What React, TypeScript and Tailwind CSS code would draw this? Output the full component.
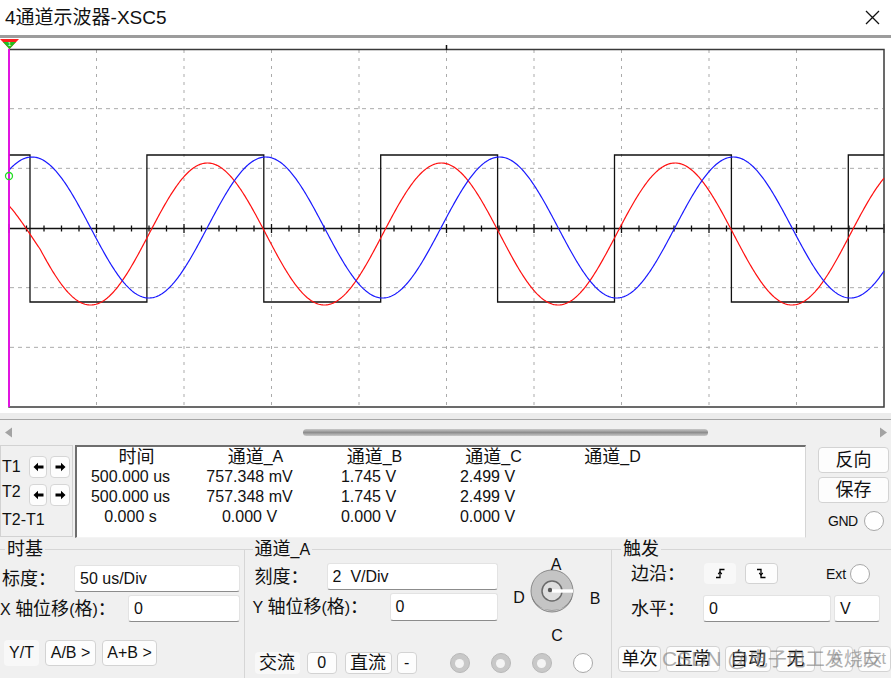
import React from 'react';

const CJK = /([\u2E80-\u9FFF\uFF00-\uFFEF]+)/;

// CJK runs are drawn a bit larger than the latin text around them
function T({ s }: { s: string }) {
  return (
    <>
      {s.split(CJK).map((p, i) =>
        CJK.test(p) ? (
          <span key={i} className="text-[18px]">
            {p}
          </span>
        ) : (
          <React.Fragment key={i}>{p}</React.Fragment>
        )
      )}
    </>
  );
}

const PERIOD = 233.8;

function wave(fn: (x: number) => number) {
  let d = '';
  for (let x = 9; x <= 884; x += 1) d += (x === 9 ? 'M' : 'L') + x + ' ' + fn(x).toFixed(2) + ' ';
  return d;
}

function squarePath() {
  const hi = 155;
  const lo = 302;
  let level = hi;
  let d = `M9 ${hi}`;
  for (let k = 0; k < 8; k++) {
    const x = (30 + k * (PERIOD / 2)).toFixed(1);
    const next = level === hi ? lo : hi;
    d += ` L${x} ${level} L${x} ${next}`;
    level = next;
  }
  d += ` L884 ${level}`;
  return d;
}

// red starts with a short settling bit at the left edge
const redPath = wave((x) => {
  const y = 234 - 71 * Math.sin((2 * Math.PI * (x - 149)) / PERIOD);
  return x < 40 ? y + 13 * ((40 - x) / 31) : y;
});
const bluePath = wave((x) => 227.5 - 70.5 * Math.cos((2 * Math.PI * (x - 32)) / PERIOD));
const sqPath = squarePath();

function Scope() {
  const cols = Array.from({ length: 9 }, (_, i) => 9 + 87.5 * (i + 1));
  const rows = [1, 2, 4, 5].map((j) => 49 + (358 / 6) * j);
  const ticks = Array.from({ length: 51 }, (_, i) => 9 + 17.5 * i);
  return (
    <svg width="891" height="375" viewBox="0 38 891 375" className="block">
      {cols.map((x) => (
        <line key={x} x1={x} y1={50} x2={x} y2={406} stroke="#ababab" strokeWidth="1" strokeDasharray="3 5" />
      ))}
      {rows.map((y) => (
        <line key={y} x1={10} y1={y} x2={883} y2={y} stroke="#ababab" strokeWidth="1" strokeDasharray="4 4" />
      ))}
      <line x1={9} y1={228.5} x2={884} y2={228.5} stroke="#111" strokeWidth="1.5" />
      {ticks.map((x, i) => (
        <line
          key={x}
          x1={x}
          x2={x}
          y1={i % 5 === 0 ? 224 : 225.5}
          y2={i % 5 === 0 ? 233 : 231.5}
          stroke="#111"
          strokeWidth="1.3"
        />
      ))}
      <rect x={9} y={49.5} width={875} height={357.5} fill="none" stroke="#3a3a3a" strokeWidth="1.5" />
      <line x1={446.5} y1={45} x2={446.5} y2={50} stroke="#111" strokeWidth="1.5" />
      <path d={sqPath} fill="none" stroke="#111" strokeWidth="1.3" />
      <path d={redPath} fill="none" stroke="#ff1010" strokeWidth="1.2" />
      <path d={bluePath} fill="none" stroke="#1a1aff" strokeWidth="1.2" />
      <line x1={9} y1={49} x2={9} y2={407} stroke="#ff00ff" strokeWidth="1.6" />
      <circle cx={9} cy={176} r={3.5} fill="none" stroke="#22dd22" strokeWidth="1.3" />
      <polygon points="0,39 19,39 9.5,49" fill="#ff2020" />
      <polygon points="3,42 16,42 9.5,49" fill="#20c020" />
      <text x={9.5} y={46} fontSize="6" fill="#fff" textAnchor="middle" fontFamily="Liberation Sans">
        1
      </text>
    </svg>
  );
}

function Arrow({ dir }: { dir: 'l' | 'r' }) {
  return (
    <svg width="11" height="10" viewBox="0 0 11 10" className={dir === 'r' ? 'rotate-180' : ''}>
      <path d="M0.5 5 L5 0.8 L5 3.4 L10.5 3.4 L10.5 6.6 L5 6.6 L5 9.2 Z" fill="#000" />
    </svg>
  );
}

function SmallBtn({ dir, w }: { dir: 'l' | 'r'; w: string }) {
  return (
    <div className={`${w} h-[22px] bg-[#fdfdfd] border border-[#d6d6d6] rounded-[4px] flex items-center justify-center`}>
      <Arrow dir={dir} />
    </div>
  );
}

function Btn({ children, w, flat }: { children: React.ReactNode; w: string; flat?: boolean }) {
  return (
    <div
      className={`${w} h-full rounded-[4px] flex items-center justify-center ${
        flat ? 'bg-[#f8f8f8] border border-transparent' : 'bg-[#fdfdfd] border border-[#d3d3d3]'
      }`}
    >
      {children}
    </div>
  );
}

function Field({ children, w }: { children: React.ReactNode; w: string }) {
  return (
    <div
      className={`${w} h-full bg-white border border-[#e3e3e3] border-b-[#8c8c8c] rounded-[3px] pl-[5px] flex items-center whitespace-pre`}
    >
      {children}
    </div>
  );
}

function Knob() {
  return (
    <svg width="100" height="90" viewBox="0 0 100 90" className="-mt-[7px] shrink-0 overflow-visible">
      <circle cx="47" cy="37" r="21" fill="#c4c4c4" stroke="#8a8a8a" strokeWidth="1" />
      <path d="M27 42 A21 21 0 0 0 67 42 A20 14 0 0 1 27 42 Z" fill="#7c7c7c" />
      <circle cx="47" cy="37" r="10" fill="#dedede" stroke="#6a6a6a" strokeWidth="1.5" />
      <circle cx="45" cy="36" r="2.2" fill="#555" />
      <rect x="47" y="35.3" width="21" height="3.4" fill="#fff" />
      <g fontFamily="Liberation Sans" fontSize="16" fill="#111" textAnchor="middle">
        <text x="51" y="16">A</text>
        <text x="90" y="50">B</text>
        <text x="52" y="87">C</text>
        <text x="14" y="49">D</text>
      </g>
    </svg>
  );
}

function Radio({ on }: { on: boolean }) {
  return on ? (
    <div className="w-[20px] h-[20px] rounded-full bg-[#c8c8c8] border border-[#b8b8b8] flex items-center justify-center">
      <div className="w-[9px] h-[9px] rounded-full bg-[#f4f4f4]" />
    </div>
  ) : (
    <div className="w-[20px] h-[20px] rounded-full bg-white border border-[#a8a8a8]" />
  );
}

function EdgeIcon({ up }: { up: boolean }) {
  return (
    <svg width="11" height="11" viewBox="0 0 11 11">
      <path d={up ? 'M1 9.5 H5 V1.5 H9.5' : 'M1 1.5 H5 V9.5 H9.5'} fill="none" stroke="#000" strokeWidth="1.3" />
      <path d={up ? 'M3.2 6 L5 4.2 L6.8 6' : 'M3.2 5 L5 6.8 L6.8 5'} fill="none" stroke="#000" strokeWidth="1.2" />
    </svg>
  );
}

const table = [
  { h: '时间', v: ['500.000 us', '500.000 us', '0.000 s'] },
  { h: '通道_A', v: ['757.348 mV', '757.348 mV', '0.000 V'] },
  { h: '通道_B', v: ['1.745 V', '1.745 V', '0.000 V'] },
  { h: '通道_C', v: ['2.499 V', '2.499 V', '0.000 V'] },
  { h: '通道_D', v: ['', '', ''] },
];

export default function App() {
  return (
    <div className="relative w-[891px] h-[678px] overflow-hidden bg-[#f0f0f0] text-[#111] font-['Liberation_Sans','Noto_Sans_CJK_SC',sans-serif] text-[16px] leading-none">
      {/* title bar */}
      <div className="h-[35px] bg-white flex items-center justify-between pl-[5px] pr-[11px]">
        <span className="text-[19px]">4通道示波器-XSC5</span>
        <svg width="15" height="15" viewBox="0 0 15 15">
          <path d="M1 1 L14 14 M14 1 L1 14" stroke="#111" strokeWidth="1.3" />
        </svg>
      </div>
      <div className="h-[3px] bg-[#9c9c9c]" />

      {/* scope screen */}
      <div className="h-[375px] bg-white">
        <Scope />
      </div>
      <div className="h-[6px] bg-[#ececec]" />

      {/* horizontal scrollbar */}
      <div className="h-[25px] border-t border-[#a6a6a6] flex items-center pl-[4px] pr-[3px]">
        <svg width="9" height="11" viewBox="0 0 9 11">
          <path d="M8 0.5 L1 5.5 L8 10.5 Z" fill="#a3a3a3" />
        </svg>
        <div className="ml-[290px] w-[405px] h-[7px] rounded-full bg-gradient-to-b from-[#c9c9c9] via-[#8e8e8e] to-[#c9c9c9]" />
        <div className="flex-1" />
        <svg width="9" height="11" viewBox="0 0 9 11">
          <path d="M1 0.5 L8 5.5 L1 10.5 Z" fill="#a3a3a3" />
        </svg>
      </div>

      {/* cursor readout */}
      <div className="h-[94px] flex items-start">
        <div className="mt-[1px] w-[73px] h-[92px] border border-[#d2d2d2] flex flex-col pt-[10px]">
          <div className="h-[22px] flex items-center">
            <span className="w-[28px] pl-[1px]">T1</span>
            <SmallBtn dir="l" w="w-[18px]" />
            <div className="w-[3px]" />
            <SmallBtn dir="r" w="w-[20px]" />
          </div>
          <div className="mt-[6px] h-[22px] flex items-center">
            <span className="w-[28px] pl-[1px] -mt-[6px]">T2</span>
            <SmallBtn dir="l" w="w-[18px]" />
            <div className="w-[3px]" />
            <SmallBtn dir="r" w="w-[20px]" />
          </div>
          <div className="mt-[3px] h-[22px] flex items-center pl-[1px]">T2-T1</div>
        </div>

        <div className="ml-[2px] mt-[1px] w-[731px] h-[93px] bg-white border-t-2 border-l-2 border-r border-b border-t-[#6e6e6e] border-l-[#6e6e6e] border-r-[#d5d5d5] border-b-[#f4f4f4] flex">
          {table.map((c) => (
            <div key={c.h} className="w-[119px] flex flex-col items-center">
              <div className="h-[20px] flex items-center">
                <T s={c.h} />
              </div>
              {c.v.map((v, i) => (
                <div key={i} className="h-[20px] flex items-center pr-[12px]">
                  {v}
                </div>
              ))}
            </div>
          ))}
        </div>

        <div className="ml-[12px] w-[71px] flex flex-col">
          <div className="mt-[3px] h-[26px]">
            <Btn w="w-full">
              <T s="反向" />
            </Btn>
          </div>
          <div className="mt-[4px] h-[26px]">
            <Btn w="w-full">
              <T s="保存" />
            </Btn>
          </div>
          <div className="mt-[8px] h-[20px] flex items-center pl-[10px]">
            <span className="text-[14px] tracking-[-0.5px]">GND</span>
            <div className="ml-[6px] w-[20px] h-[20px] rounded-full bg-white border border-[#a8a8a8]" />
          </div>
        </div>
      </div>

      {/* control groups */}
      <div className="flex h-[140px]">
        <fieldset className="w-[245px] border-t border-r border-[#d6d6d6]">
          <legend className="ml-[5px] px-[2px] text-[18px] leading-[22px]">时基</legend>
          <div className="mt-[5px] h-[27px] flex items-center">
            <span className="w-[74px] pl-[2px]">
              <T s="标度：" />
            </span>
            <Field w="w-[166px]">50 us/Div</Field>
          </div>
          <div className="mt-[3px] h-[27px] flex items-center">
            <span className="w-[128px]">
              <T s="X 轴位移(格)：" />
            </span>
            <Field w="w-[112px]">0</Field>
          </div>
          <div className="mt-[18px] h-[26px] flex pl-[4px] gap-[6px]">
            <Btn w="w-[35px]" flat>
              Y/T
            </Btn>
            <Btn w="w-[51px]">A/B &gt;</Btn>
            <Btn w="w-[55px]">A+B &gt;</Btn>
          </div>
        </fieldset>

        <fieldset className="w-[368px] border-t border-r border-[#d6d6d6]">
          <legend className="ml-[8px] px-[2px] leading-[22px]">
            <T s="通道_A" />
          </legend>
          <div className="h-[60px] flex items-start">
            <div className="w-[253px] flex flex-col">
              <div className="mt-[2px] h-[27px] flex items-center">
                <span className="w-[82px] pl-[10px]">
                  <T s="刻度：" />
                </span>
                <Field w="w-[171px]">2  V/Div</Field>
              </div>
              <div className="mt-[3px] h-[28px] flex items-center">
                <span className="w-[145px] pl-[8px]">
                  <T s="Y 轴位移(格)：" />
                </span>
                <Field w="w-[108px]">0</Field>
              </div>
            </div>
            <div className="ml-[7px]">
              <Knob />
            </div>
          </div>
          <div className="mt-[31px] h-[22px] flex items-center pl-[10px]">
            <Btn w="w-[45px]" flat>
              <T s="交流" />
            </Btn>
            <div className="w-[7px]" />
            <Btn w="w-[30px]">0</Btn>
            <div className="w-[8px]" />
            <Btn w="w-[47px]">
              <T s="直流" />
            </Btn>
            <div className="w-[5px]" />
            <Btn w="w-[20px]">-</Btn>
            <div className="ml-[33px] flex gap-[21px]">
              <Radio on />
              <Radio on />
              <Radio on />
              <Radio on={false} />
            </div>
          </div>
        </fieldset>

        <fieldset className="flex-1 border-t border-[#d6d6d6]">
          <legend className="ml-[9px] px-[2px] text-[18px] leading-[22px]">触发</legend>
          <div className="mt-[3px] h-[21px] flex items-center pl-[19px]">
            <span className="w-[73px]">
              <T s="边沿：" />
            </span>
            <Btn w="w-[32px]" flat>
              <EdgeIcon up />
            </Btn>
            <div className="w-[9px]" />
            <Btn w="w-[33px]">
              <EdgeIcon up={false} />
            </Btn>
            <span className="ml-[48px] text-[14px]">Ext</span>
            <div className="ml-[4px] w-[20px] h-[20px] rounded-full bg-white border border-[#a8a8a8]" />
          </div>
          <div className="mt-[11px] h-[27px] flex items-center pl-[19px]">
            <span className="w-[72px]">
              <T s="水平：" />
            </span>
            <Field w="w-[128px]">0</Field>
            <div className="w-[3px]" />
            <Field w="w-[46px]">V</Field>
          </div>
          <div className="mt-[24px] h-[26px] flex pl-[6px] gap-[5px]">
            <Btn w="w-[43px]">
              <T s="单次" />
            </Btn>
            <Btn w="w-[54px]">
              <T s="正常" />
            </Btn>
            <Btn w="w-[46px]">
              <T s="自动" />
            </Btn>
            <Btn w="w-[39px]">
              <T s="无" />
            </Btn>
            <Btn w="w-[33px]">
              <span className="text-[#b0b0b0]">A</span>
            </Btn>
            <Btn w="w-[33px]">
              <span className="text-[#b0b0b0]">Ext</span>
            </Btn>
          </div>
        </fieldset>
      </div>

      {/* watermark */}
      <div className="absolute left-[662px] top-[647px] text-[21px] leading-[24px] text-[#7a7a7a] opacity-60 whitespace-nowrap pointer-events-none">
        CSDN @<span className="text-[19px]">电子电工发烧友</span>
      </div>
    </div>
  );
}
